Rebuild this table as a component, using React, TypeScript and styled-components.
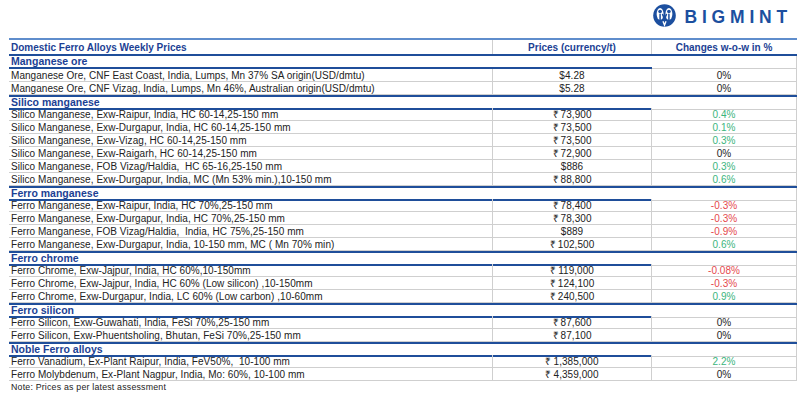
import styled, { createGlobalStyle } from 'styled-components';

const GlobalStyle = createGlobalStyle`
  html, body {
    margin: 0;
    padding: 0;
    background: #ffffff;
    font-family: "Liberation Sans", Arial, sans-serif;
  }
  * { box-sizing: border-box; }
`;

type Trend = 'up' | 'down' | 'flat';

interface PriceRow {
  name: string;
  price: string;
  change: string;
}

interface Section {
  title: string;
  rows: PriceRow[];
}

const sections: Section[] = [
  {
    title: 'Manganese ore',
    rows: [
      { name: 'Manganese Ore, CNF East Coast, India, Lumps, Mn 37% SA origin(USD/dmtu)', price: '$4.28', change: '0%' },
      { name: 'Manganese Ore, CNF Vizag, India, Lumps, Mn 46%, Australian origin(USD/dmtu)', price: '$5.28', change: '0%' },
    ],
  },
  {
    title: 'Silico manganese',
    rows: [
      { name: 'Silico Manganese, Exw-Raipur, India, HC 60-14,25-150 mm', price: '₹73,900', change: '0.4%' },
      { name: 'Silico Manganese, Exw-Durgapur, India, HC 60-14,25-150 mm', price: '₹73,500', change: '0.1%' },
      { name: 'Silico Manganese, Exw-Vizag, HC 60-14,25-150 mm', price: '₹73,500', change: '0.3%' },
      { name: 'Silico Manganese, Exw-Raigarh, HC 60-14,25-150 mm', price: '₹72,900', change: '0%' },
      { name: 'Silico Manganese, FOB Vizag/Haldia,  HC 65-16,25-150 mm', price: '$886', change: '0.3%' },
      { name: 'Silico Manganese, Exw-Durgapur, India, MC (Mn 53% min.),10-150 mm', price: '₹88,800', change: '0.6%' },
    ],
  },
  {
    title: 'Ferro manganese',
    rows: [
      { name: 'Ferro Manganese, Exw-Raipur, India, HC 70%,25-150 mm', price: '₹78,400', change: '-0.3%' },
      { name: 'Ferro Manganese, Exw-Durgapur, India, HC 70%,25-150 mm', price: '₹78,300', change: '-0.3%' },
      { name: 'Ferro Manganese, FOB Vizag/Haldia,  India, HC 75%,25-150 mm', price: '$889', change: '-0.9%' },
      { name: 'Ferro Manganese, Exw-Durgapur, India, 10-150 mm, MC ( Mn 70% min)', price: '₹102,500', change: '0.6%' },
    ],
  },
  {
    title: 'Ferro chrome',
    rows: [
      { name: 'Ferro Chrome, Exw-Jajpur, India, HC 60%,10-150mm', price: '₹119,000', change: '-0.08%' },
      { name: 'Ferro Chrome, Exw-Jajpur, India, HC 60% (Low silicon) ,10-150mm', price: '₹124,100', change: '-0.3%' },
      { name: 'Ferro Chrome, Exw-Durgapur, India, LC 60% (Low carbon) ,10-60mm', price: '₹240,500', change: '0.9%' },
    ],
  },
  {
    title: 'Ferro silicon',
    rows: [
      { name: 'Ferro Silicon, Exw-Guwahati, India, FeSi 70%,25-150 mm', price: '₹87,600', change: '0%' },
      { name: 'Ferro Silicon, Exw-Phuentsholing, Bhutan, FeSi 70%,25-150 mm', price: '₹87,100', change: '0%' },
    ],
  },
  {
    title: 'Noble Ferro alloys',
    rows: [
      { name: 'Ferro Vanadium, Ex-Plant Raipur, India, FeV50%,  10-100 mm', price: '₹1,385,000', change: '2.2%' },
      { name: 'Ferro Molybdenum, Ex-Plant Nagpur, India, Mo: 60%, 10-100 mm', price: '₹4,359,000', change: '0%' },
    ],
  },
];

function trendOf(change: string): Trend {
  if (change.startsWith('-')) return 'down';
  if (parseFloat(change) > 0) return 'up';
  return 'flat';
}

const trendColor: Record<Trend, string> = {
  up: '#3bb57c',
  down: '#e5484d',
  flat: '#222222',
};

function formatPrice(price: string) {
  return price.startsWith('₹') ? '₹\u2009' + price.slice(1) : price;
}

export default function App() {
  return (
    <Page>
      <GlobalStyle />
      <TopBar>
        <Logo>
          <LogoMark />
          <LogoText>BIGMINT</LogoText>
        </Logo>
      </TopBar>
      <Table>
        <HeaderRow>
          <HeaderCell align="left">Domestic Ferro Alloys Weekly Prices</HeaderCell>
          <HeaderCell align="center">Prices (currency/t)</HeaderCell>
          <HeaderCell align="center" last>Changes w-o-w in %</HeaderCell>
        </HeaderRow>
        {sections.map((section, si) => (
          <Group key={section.title}>
            <SectionRow first={si === 0}>
              <SectionTitle>{section.title}</SectionTitle>
              <SectionBlank />
            </SectionRow>
            {section.rows.map(row => (
              <DataRow key={row.name}>
                <NameCell>{row.name}</NameCell>
                <PriceCell>{formatPrice(row.price)}</PriceCell>
                <ChangeCell trend={trendOf(row.change)}>{row.change}</ChangeCell>
              </DataRow>
            ))}
          </Group>
        ))}
      </Table>
      <Note>Note: Prices as per latest assessment</Note>
    </Page>
  );
}

function LogoMark() {
  return (
    <svg width="23" height="23" viewBox="-12 -12 24 24">
      <circle cx="0" cy="0" r="11.8" fill="#1c4f9f" />
      <ellipse cx="-4.6" cy="-1.5" rx="3.6" ry="6.2" fill="#ffffff" />
      <ellipse cx="4.6" cy="-1.5" rx="3.6" ry="6.2" fill="#ffffff" />
      <circle cx="-4.6" cy="-4.2" r="1.9" fill="#1c4f9f" />
      <circle cx="4.6" cy="-4.2" r="1.9" fill="#1c4f9f" />
      <path d="M -4.6 -1.4 L -4.6 6 M 4.6 -1.4 L 4.6 6 M -2 -1 L 0 3.5 L 2 -1" stroke="#1c4f9f" strokeWidth="1.6" fill="none" strokeLinecap="round" />
      <path d="M -1.6 6 L 0 10 L 1.6 6" stroke="#ffffff" strokeWidth="1.4" fill="none" />
    </svg>
  );
}

const Page = styled.div`
  width: 804px;
  height: 401px;
  overflow: hidden;
  padding-left: 9px;
`;

const TopBar = styled.div`
  height: 38px;
  display: flex;
  justify-content: flex-end;
  align-items: flex-start;
  padding: 4px 12px 0 0;
`;

const Logo = styled.div`
  display: flex;
  align-items: flex-end;
  gap: 9px;
`;

const LogoText = styled.span`
  font-family: "Liberation Sans", Arial, sans-serif;
  font-weight: 700;
  font-size: 17.5px;
  letter-spacing: 4.8px;
  color: #1c4f9f;
  line-height: 1;
  padding-bottom: 1px;
`;

const Table = styled.div`
  width: 788px;
  display: flex;
  flex-direction: column;
`;

const Group = styled.div`
  display: flex;
  flex-direction: column;
`;

const grid = `
  display: grid;
  grid-template-columns: 484px 159px 145px;
`;

const HeaderRow = styled.div`
  ${grid}
  height: 18px;
  border-top: 2px solid #5f8dcc;
  border-bottom: 2px solid #1f4e9a;
`;

const HeaderCell = styled.div<{ align: 'left' | 'center'; last?: boolean }>`
  display: flex;
  align-items: center;
  justify-content: ${p => (p.align === 'left' ? 'flex-start' : 'center')};
  padding-left: ${p => (p.align === 'left' ? '2px' : '0')};
  border-right: 1px solid ${p => (p.last ? 'transparent' : '#cfcfcf')};
  font-size: 10px;
  font-weight: 700;
  color: #1c3f94;
  white-space: nowrap;
`;

const SectionRow = styled.div<{ first: boolean }>`
  display: grid;
  grid-template-columns: 643px 145px;
  height: 13px;
  border-top: ${p => (p.first ? 'none' : '2px solid #1f4e9a')};
`;

const SectionTitle = styled.div`
  display: flex;
  align-items: center;
  padding-left: 2px;
  border-bottom: 2px solid #1f4e9a;
  font-size: 10.5px;
  font-weight: 700;
  color: #1c3f94;
  line-height: 1;
  white-space: nowrap;
`;

const SectionBlank = styled.div`
  border-bottom: 1px solid #cfcfcf;
  border-right: 1px solid #cfcfcf;
`;

const DataRow = styled.div`
  ${grid}
  height: 13px;
  border-bottom: 1px solid #cfcfcf;
`;

const cell = `
  display: flex;
  align-items: center;
  padding-top: 1px;
  border-right: 1px solid #cfcfcf;
  font-size: 10px;
  letter-spacing: 0.05px;
  line-height: 1;
  white-space: pre;
  color: #222222;
`;

const NameCell = styled.div`
  ${cell}
  padding-left: 2px;
`;

const PriceCell = styled.div`
  ${cell}
  justify-content: center;
`;

const ChangeCell = styled.div<{ trend: Trend }>`
  ${cell}
  justify-content: center;
  color: ${p => trendColor[p.trend]};
`;

const Note = styled.div`
  padding: 1px 0 0 2px;
  font-size: 8.8px;
  letter-spacing: 0.2px;
  color: #222222;
`;
